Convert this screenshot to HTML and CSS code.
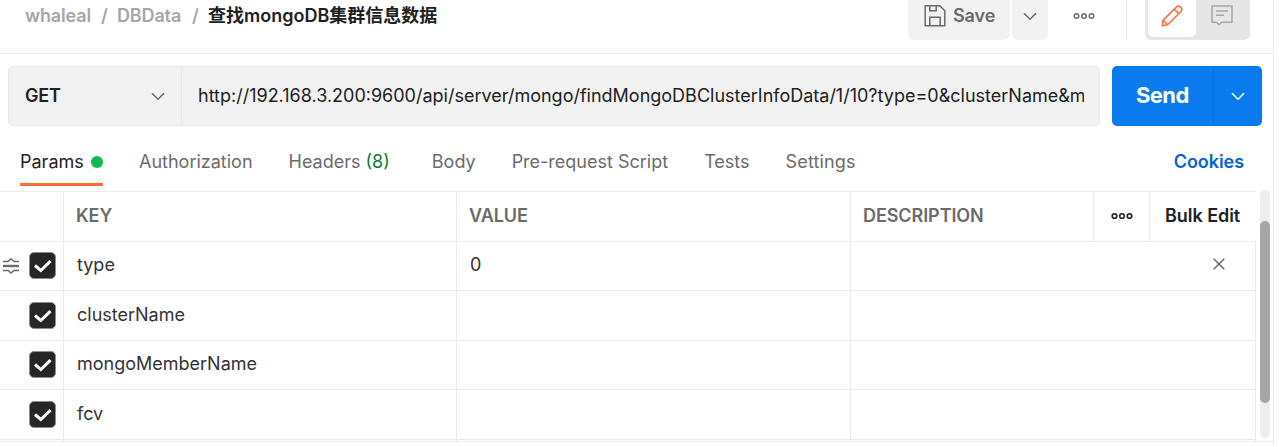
FILE: index.html
```html
<!DOCTYPE html>
<html lang="zh">
<head>
<meta charset="utf-8">
<title>Request</title>
<link rel="stylesheet" href="styles.css">
</head>
<body>
<main class="pane">
  <header class="topbar">
    <nav class="crumbs">
      <span class="crumb-a">whaleal</span><span class="slash-a">/</span><span class="crumb-b">DBData</span><span class="slash-b">/</span><strong class="title">查找mongoDB集群信息数据</strong>
    </nav>
    <div class="actions">
      <button class="save">
        <svg width="22" height="22" viewBox="0 0 22 22" fill="none" stroke="#6b6b6b" stroke-width="1.5"><path d="M1.2 .8H15.8L20.8 5.8V20.8H1.2ZM5.8 .8V5.8H12.2V.8M5.8 20.8V12.2H16.2V20.8"/></svg>
        <span class="save-label">Save</span>
      </button>
      <button class="save-more"><svg width="14" height="9" viewBox="0 0 14 9" fill="none" stroke="#6b6b6b" stroke-width="1.5"><path d="M1 1.2L7 7.2L13 1.2"/></svg></button>
      <svg class="dots" width="22" height="8" viewBox="0 0 22 8" fill="none" stroke="#6b6b6b" stroke-width="1.5"><circle cx="3.5" cy="4" r="2.3"/><circle cx="11" cy="4" r="2.3"/><circle cx="18.5" cy="4" r="2.3"/></svg>
      <span class="rule"></span>
      <div class="switch">
        <span class="switch-on"><svg width="22" height="22" viewBox="0 0 22 22" fill="none" stroke="#ff6c37" stroke-width="1.5" stroke-linejoin="round"><path d="M1.3 20.7L2 15.4L15.6 1.8Q17.2 .3 19 1.6L20.2 2.8Q21.6 4.4 20.2 6.2L6.6 19.7ZM13.3 4.2L17.8 8.6M2 15.4L6.6 19.7"/></svg></span>
        <span class="switch-off"><svg width="22" height="21" viewBox="0 0 22 21" fill="none" stroke="#a6a6a6" stroke-width="1.5"><path d="M1 1H21V17.2H11L8 19.8L5.5 17.2H1ZM5 6H17M5 10.2H13"/></svg></span>
      </div>
    </div>
  </header>

  <section class="request">
    <div class="address">
      <div class="method"><span>GET</span><svg width="14" height="9" viewBox="0 0 14 9" fill="none" stroke="#6b6b6b" stroke-width="1.5"><path d="M1 1.2L7 7.2L13 1.2"/></svg></div>
      <div class="url"><span class="url-text">http://192.168.3.200:9600/api/server/mongo/findMongoDBClusterInfoData/1/10?type=0&amp;clusterName&amp;m</span></div>
    </div>
    <div class="send">
      <span class="send-label">Send</span>
      <span class="send-more"><svg width="14" height="9" viewBox="0 0 14 9" fill="none" stroke="#fff" stroke-width="1.5"><path d="M1 1.2L7 7.2L13 1.2"/></svg></span>
    </div>
  </section>

  <nav class="tabs">
    <span class="tab active">Params<i class="live"></i></span>
    <span class="tab">Authorization</span>
    <span class="tab headers">Headers <em class="count">(8)</em></span>
    <span class="tab">Body</span>
    <span class="tab">Pre-request Script</span>
    <span class="tab">Tests</span>
    <span class="tab settings">Settings</span>
    <a class="cookies">Cookies</a>
  </nav>

  <section class="params">
    <div class="grid">
      <div class="row head">
        <span class="cell check"></span><span class="cell">KEY</span><span class="cell">VALUE</span><span class="cell">DESCRIPTION</span>
        <span class="cell more"><svg width="22" height="8" viewBox="0 0 22 8" fill="none" stroke="#212121" stroke-width="1.6"><circle cx="3.5" cy="4" r="2.3"/><circle cx="11" cy="4" r="2.3"/><circle cx="18.5" cy="4" r="2.3"/></svg></span>
        <span class="bulk">Bulk Edit</span>
      </div>
      <div class="row short">
        <span class="cell check"><svg class="grip" width="16" height="18" viewBox="0 0 16 18" fill="none" stroke="#6b6b6b" stroke-width="1.4"><path d="M0 4.5H5L8 2L11 4.5H16M0 13.5H5L8 16L11 13.5H16"/><path d="M0 9H16" stroke-width="2.4"/></svg><span class="box"><svg width="18" height="14" viewBox="0 0 18 14" fill="none" stroke="#fff" stroke-width="3"><path d="M1 6.5L6.8 11.5L16.5 2.2"/></svg></span></span>
        <span class="cell">type</span><span class="cell">0</span>
        <span class="cell desc"><svg width="12" height="12" viewBox="0 0 12 12" fill="none" stroke="#6b6b6b" stroke-width="1.5"><path d="M.7 .7L11.3 11.3M11.3 .7L.7 11.3"/></svg></span>
      </div>
      <div class="row">
        <span class="cell check"><span class="box"><svg width="18" height="14" viewBox="0 0 18 14" fill="none" stroke="#fff" stroke-width="3"><path d="M1 6.5L6.8 11.5L16.5 2.2"/></svg></span></span>
        <span class="cell">clusterName</span><span class="cell"></span><span class="cell desc"></span>
      </div>
      <div class="row short">
        <span class="cell check"><span class="box"><svg width="18" height="14" viewBox="0 0 18 14" fill="none" stroke="#fff" stroke-width="3"><path d="M1 6.5L6.8 11.5L16.5 2.2"/></svg></span></span>
        <span class="cell">mongoMemberName</span><span class="cell"></span><span class="cell desc"></span>
      </div>
      <div class="row">
        <span class="cell check"><span class="box"><svg width="18" height="14" viewBox="0 0 18 14" fill="none" stroke="#fff" stroke-width="3"><path d="M1 6.5L6.8 11.5L16.5 2.2"/></svg></span></span>
        <span class="cell">fcv</span><span class="cell"></span><span class="cell desc"></span>
      </div>
      <div class="row next"><span class="cell check"></span><span class="cell"></span><span class="cell"></span><span class="cell desc"></span></div>
    </div>
    <div class="scroll"><div class="thumb"></div></div>
  </section>
</main>
</body>
</html>
```
FILE: styles.css
```css
* { box-sizing: border-box; }
body {
  margin: 0;
  height: 447px;
  overflow: hidden;
  background: #fff;
  color: #212121;
  font: 400 18px/24px Inter, "Noto Sans CJK SC", sans-serif;
}
svg { display: block; flex: none; }
button { border: 0; padding: 0; font: inherit; color: inherit; }
.pane { width: 1274px; height: 447px; border-right: 1px solid #ebebeb; }

.topbar {
  display: flex;
  justify-content: space-between;
  height: 54px;
  border-bottom: 1px solid #ebebeb;
}
.crumbs { display: flex; padding: 4px 0 0 25px; color: #a6a6a6; font-weight: 600; letter-spacing: -.15px; white-space: nowrap; }
.crumb-a { width: 76px; }
.slash-a { width: 16px; }
.crumb-b { width: 75px; }
.slash-b { width: 16px; }
.title { color: #212121; font-weight: 600; letter-spacing: 0; }
.actions { display: flex; height: 40px; padding-right: 23px; }
.save {
  display: flex;
  gap: 7px;
  width: 102px;
  padding: 5px 0 0 16px;
  background: #f2f2f2;
  border-radius: 0 0 6px 6px;
  color: #6b6b6b;
  font-weight: 600;
}
.save-label { margin-top: -1px; letter-spacing: -.1px; }
.save-more {
  display: flex;
  justify-content: center;
  width: 36px;
  margin-left: 2px;
  padding-top: 12px;
  background: #f2f2f2;
  border-radius: 0 0 6px 6px;
}
.dots { margin: 12px 31px 0 25px; }
.rule { width: 1px; background: #e6e6e6; }
.switch { display: flex; width: 105px; margin-left: 18px; padding: 0 3px; background: #e6e6e6; border-radius: 0 0 6px 6px; }
.switch-on { width: 48px; height: 37px; padding: 5px 0 0 13px; background: #fff; border-radius: 0 0 6px 6px; }
.switch-off { padding: 5px 0 0 15px; }

.request { display: flex; gap: 12px; padding: 12px 0 0 8px; }
.address {
  display: flex;
  width: 1092px;
  height: 60px;
  background: #f2f2f2;
  border: 1px solid #e6e6e6;
  border-radius: 5px;
}
.method {
  display: flex;
  align-items: center;
  justify-content: space-between;
  width: 173px;
  padding: 0 16px;
  border-right: 1px solid #e6e6e6;
  font-weight: 600;
  letter-spacing: -.2px;
}
.url { display: flex; align-items: center; width: 902px; padding-left: 16px; }
.url-text { width: 886px; overflow: hidden; white-space: nowrap; }
.send {
  display: flex;
  width: 150px;
  height: 60px;
  background: #097bed;
  border-radius: 5px;
  color: #fff;
  font-size: 22px;
  line-height: 59px;
  font-weight: 600;
}
.send-label { width: 101px; padding-left: 24px; letter-spacing: -.6px; font-weight: 700; }
.send-more { display: flex; flex: 1; align-items: center; justify-content: center; border-left: 1px solid #066bcf; }

.tabs { display: flex; gap: 36px; height: 65px; padding: 24px 29px 0 20px; color: #6b6b6b; white-space: nowrap; }
.tab { height: 36px; }
.active { display: flex; width: 83px; color: #212121; border-bottom: 3px solid #ff6c37; }
.live { width: 12px; height: 12px; margin: 6px 0 0 auto; border-radius: 50%; background: #0cbb52; }
.headers { margin-right: 6px; }
.settings { letter-spacing: .15px; }
.count { color: #007f31; font-style: normal; }
.cookies { margin-left: auto; color: #0265d2; font-weight: 600; letter-spacing: -.05px; }

.params { display: flex; gap: 4px; height: 252px; margin-top: -1px; border-bottom: 1px solid #ebebeb; }
.grid { width: 1256px; height: 251px; padding-top: 1px; overflow: hidden; }
.row {
  display: grid;
  grid-template-columns: 64px 393px 394px 405px;
  height: 50px;
  border-bottom: 1px solid #ebebeb;
}
.cell { padding: 12px 0 0 13px; border-right: 1px solid #ebebeb; line-height: 24px; color: #333; }
.short { height: 49px; }
.short .cell { padding-top: 11px; }
.head {
  grid-template-columns: 64px 393px 394px 243px 56px 106px;
  height: 51px;
  border-top: 1px solid #ebebeb;
  font-weight: 600;
}
.head .cell { padding-left: 12px; color: #6b6b6b; letter-spacing: -.08px; }
.head .more { padding: 20px 0 0 17px; }
.bulk { padding: 12px 0 0 15px; font-weight: 600; letter-spacing: -.05px; }
.row .check { display: flex; justify-content: flex-end; padding: 11px 7px 0 0; }
.short .check { padding-top: 10px; }
.grip { margin: 5px 10px 0 0; }
.box {
  display: flex;
  align-items: center;
  justify-content: center;
  width: 27px;
  height: 27px;
  background: #262626;
  border: 1px solid #8c8c8c;
  border-radius: 5px;
}
.row .desc { display: flex; justify-content: flex-end; padding: 16px 30px 0 0; }
.scroll { width: 10px; height: 248px; padding-top: 31px; border-radius: 5px; background: #ededed; }
.thumb { height: 182px; border-radius: 5px; background: #a6a6a6; }
```
